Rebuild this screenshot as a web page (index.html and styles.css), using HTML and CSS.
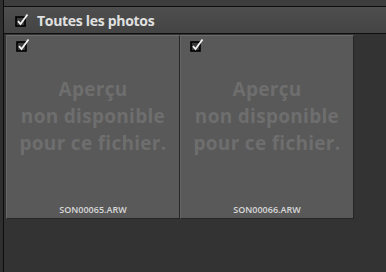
FILE: index.html
```html
<!DOCTYPE html>
<html lang="fr">
<head>
<meta charset="utf-8">
<link rel="stylesheet" href="styles.css">
</head>
<body>
<div class="app">
  <div class="side"></div>
  <div class="main">
    <div class="topstrip"></div>
    <div class="header">
      <svg class="chk" width="14" height="14" viewBox="0 0 14 14"><rect x="1" y="4" width="9" height="9" fill="#3a3a3a" stroke="#000" stroke-width="1.6"/><path d="M3 8.2 L5.5 11 L12.5 1.5" fill="none" stroke="#f2f2f2" stroke-width="1.8"/></svg>
      <span class="title">Toutes les photos</span>
    </div>
    <div class="grid">
      <div class="tile">
        <svg class="chk tchk" width="14" height="14" viewBox="0 0 14 14"><rect x="1" y="4" width="9" height="9" fill="#3a3a3a" stroke="#000" stroke-width="1.6"/><path d="M3 8.2 L5.5 11 L12.5 1.5" fill="none" stroke="#f2f2f2" stroke-width="1.8"/></svg>
        <div class="ph">Aperçu<br>non disponible<br>pour ce fichier.</div>
        <div class="fname">SON00065.ARW</div>
      </div>
      <div class="tile">
        <svg class="chk tchk" width="14" height="14" viewBox="0 0 14 14"><rect x="1" y="4" width="9" height="9" fill="#3a3a3a" stroke="#000" stroke-width="1.6"/><path d="M3 8.2 L5.5 11 L12.5 1.5" fill="none" stroke="#f2f2f2" stroke-width="1.8"/></svg>
        <div class="ph">Aperçu<br>non disponible<br>pour ce fichier.</div>
        <div class="fname">SON00066.ARW</div>
      </div>
    </div>
  </div>
</div>
</body>
</html>
```
FILE: styles.css
```css
html, body {
  margin: 0;
  padding: 0;
  background: #333333;
  font-family: "Open Sans", "Noto Sans", sans-serif;
}
.app {
  display: flex;
  width: 386px;
  height: 272px;
  overflow: hidden;
}
.side {
  width: 3px;
  background: #2f2f2f;
  border-right: 1px solid #0c0c0c;
  flex: none;
}
.main {
  flex: 1;
  display: flex;
  flex-direction: column;
}
.topstrip {
  height: 6px;
  background: #3d3d3d;
  border-bottom: 1px solid #0e0e0e;
}
.header {
  height: 27px;
  background: linear-gradient(#4e4e4e, #444444);
  border-bottom: 1px solid #0e0e0e;
  display: flex;
  align-items: center;
  box-sizing: border-box;
}
.header .chk {
  margin-left: 11px;
  margin-top: -1px;
}
.title {
  margin-left: 8px;
  color: #e0e0e0;
  font-weight: 700;
  font-size: 14px;
  letter-spacing: -0.3px;
}
.grid {
  flex: 1;
  display: flex;
  align-items: flex-start;
  padding: 1px 0 0 2px;
  background: #333333;
}
.tile {
  width: 172px;
  height: 182px;
  background: #595959;
  border-top: 1px solid #6c6c6c;
  border-left: 1px solid #656565;
  border-right: 1px solid #262626;
  border-bottom: 1px solid #262626;
  display: flex;
  flex-direction: column;
  align-items: center;
  position: relative;
}
.tchk {
  position: absolute;
  left: 9px;
  top: 2px;
}
.ph {
  margin-top: 40px;
  color: #6e6e6e;
  font-weight: 700;
  font-size: 19px;
  letter-spacing: 0.3px;
  line-height: 27px;
  text-align: center;
}
.fname {
  margin-top: auto;
  margin-bottom: 2px;
  color: #d8d8d8;
  font-size: 9px;
  font-weight: 600;
}
```
